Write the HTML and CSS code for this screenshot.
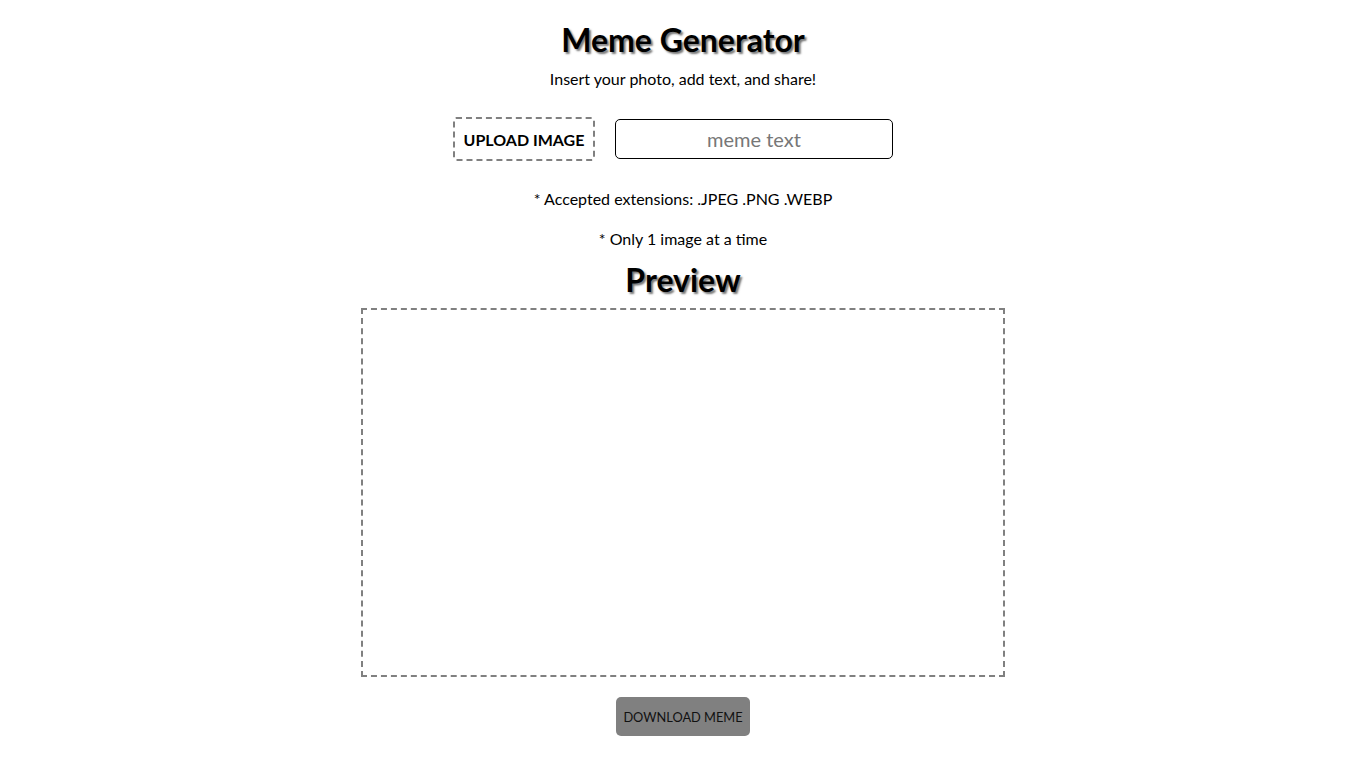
FILE: index.html
```html
<!DOCTYPE html>
<html lang="en">
<head>
<meta charset="utf-8">
<title>Meme Generator</title>
<link rel="stylesheet" href="styles.css">
</head>
<body>
<main class="page">
  <h1 class="title">Meme Generator</h1>
  <p class="subtitle">Insert your photo, add text, and share!</p>
  <div class="controls">
    <label class="upload">UPLOAD IMAGE</label>
    <input class="meme-input" type="text" placeholder="meme text">
    <span class="file-slot"></span>
  </div>
  <p class="note note-first">* Accepted extensions: .JPEG .PNG .WEBP</p>
  <p class="note note-second">* Only 1 image at a time</p>
  <h2 class="preview-title">Preview</h2>
  <div class="preview"></div>
  <button class="download">DOWNLOAD MEME</button>
</main>
</body>
</html>
```
FILE: styles.css
```css
* { box-sizing: border-box; }
html, body { margin: 0; padding: 0; background: #fff; }
body { font-family: "Lato", "Noto Sans", sans-serif; color: #000; }
.page {
  display: flex;
  flex-direction: column;
  align-items: center;
  padding-top: 20px;
}
.title {
  margin: 0;
  font-size: 32px;
  font-weight: 700;
  line-height: 40px;
  text-shadow: 2px 2px 2px #777;
}
.subtitle {
  margin: 8px 0 0;
  font-size: 16px;
  line-height: 22px;
}
.controls {
  margin-top: 27px;
  display: flex;
  align-items: center;
  gap: 20px;
}
.file-slot { width: 0; height: 0; }
.upload {
  display: flex;
  align-items: center;
  justify-content: center;
  flex: none;
  width: 142px;
  height: 44px;
  border: 2px dashed #808080;
  border-radius: 3px;
  font-size: 16px;
  font-weight: 700;
}
.meme-input {
  flex: none;
  width: 278px;
  height: 40px;
  border: 1px solid #000;
  border-radius: 5px;
  font-family: inherit;
  font-size: 20px;
  text-align: center;
  outline: none;
}
.meme-input::placeholder { color: #777; }
.note {
  margin: 0;
  font-size: 16px;
  line-height: 22px;
}
.note-first { margin-top: 27px; }
.note-second { margin-top: 18px; }
.preview-title {
  margin: 10px 0 0;
  font-size: 32px;
  font-weight: 700;
  line-height: 40px;
  text-shadow: 2px 2px 2px #777;
}
.preview {
  margin-top: 8px;
  width: 644px;
  height: 369px;
  border: 2px dashed #808080;
}
.download {
  margin-top: 20px;
  width: 134px;
  height: 39px;
  background: #808080;
  border: none;
  border-radius: 5px;
  font-family: "Lato", sans-serif;
  font-size: 12.8px;
  color: #111;
  padding: 0;
}
```
